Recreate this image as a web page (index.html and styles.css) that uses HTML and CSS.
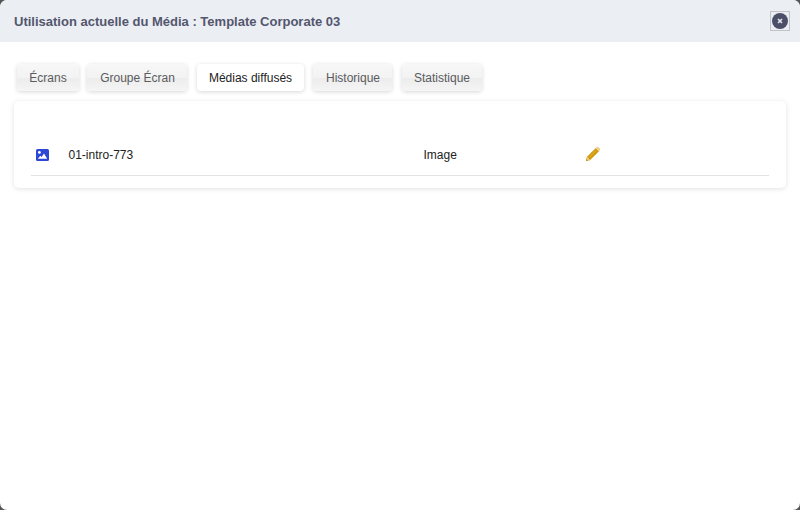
FILE: index.html
```html
<!DOCTYPE html>
<html lang="fr">
<head>
<meta charset="utf-8">
<title>Utilisation actuelle du Média</title>
<link rel="stylesheet" href="styles.css">
</head>
<body>
<div class="modal">
  <header class="modal-header">
    <h1 class="modal-title">Utilisation actuelle du Média : Template Corporate 03</h1>
    <button class="close" type="button" aria-label="Fermer">
      <svg viewBox="0 0 16 16" width="16" height="16" aria-hidden="true">
        <circle cx="8" cy="8" r="8" fill="#4b4f68"/>
        <path d="M6 6l4 4M10 6l-4 4" stroke="#e8e8ee" stroke-width="1.6"/>
      </svg>
    </button>
  </header>
  <main class="modal-body">
    <nav class="tabs">
      <a class="tab t1">Écrans</a>
      <a class="tab t2">Groupe Écran</a>
      <a class="tab t3 active">Médias diffusés</a>
      <a class="tab t4">Historique</a>
      <a class="tab t5">Statistique</a>
    </nav>
    <section class="card">
      <div class="row">
        <span class="cell-icon">
          <svg viewBox="0 0 13 12" width="13" height="12" aria-hidden="true">
            <rect width="13" height="12" rx="1.5" fill="#2f48d4"/>
            <circle cx="3.4" cy="3.4" r="1.4" fill="#fff"/>
            <path d="M1.8 9.800l2.600-3 1.200 1.200 2.400-3.400 3.200 5.200z" fill="#fff"/>
          </svg>
        </span>
        <span class="cell-name">01-intro-773</span>
        <span class="cell-type">Image</span>
        <span class="cell-action">
          <svg viewBox="0 0 16 16" width="16" height="16" aria-hidden="true">
            <path d="M1 15l1-4.200L10.800 2l3.200 3.200L5.200 14z" fill="#cf9a10"/>
            <path d="M11.600 1.200c.7-.7 1.600-.7 2.200 0l1 1c.6.6.6 1.500 0 2.200L14 5.200 10.800 2z" fill="#eed08f"/>
            <path d="M1 15l1-4.200L5.200 14z" fill="#eccb83"/>
            <path d="M1 15l.5-2 1.500 1.500z" fill="#b5820c"/>
            <path d="M4 11.600l7.200-7.200" stroke="#e8b62e" stroke-width="1"/>
          </svg>
        </span>
      </div>
    </section>
  </main>
</div>
</body>
</html>
```
FILE: styles.css
```css
* { box-sizing: border-box; }
html, body { height: 100%; }
body {
  margin: 0;
  background: #555;
  font-family: "Liberation Sans", Arial, sans-serif;
}
.modal {
  display: flex;
  flex-direction: column;
  height: 510px;
  background: #fff;
  border-radius: 7px;
  overflow: hidden;
}
.modal-header {
  flex: none;
  display: flex;
  align-items: center;
  justify-content: space-between;
  height: 42px;
  padding: 0 10px 0 14px;
  background: #ebeef3;
}
.modal-title {
  margin: 0;
  font-size: 13px;
  font-weight: 700;
  color: #53566e;
}
.close {
  display: flex;
  align-items: center;
  justify-content: center;
  width: 20px;
  height: 20px;
  padding: 0;
  background: transparent;
  border: 1px solid #c4c4c8;
}
.modal-body {
  flex: 1;
  padding: 22px 14px 0;
}
.tabs {
  display: flex;
  height: 27px;
  padding-left: 2.5px;
  margin-bottom: 10px;
}
.tab {
  display: flex;
  align-items: center;
  justify-content: center;
  height: 27px;
  padding-left: 1px;
  font-size: 12px;
  color: #5b5b60;
  background: linear-gradient(#f7f7f7 0%, #f3f3f3 50%, #ececec 52%, #f5f5f5 100%);
  border-radius: 4px;
  box-shadow: 0 1px 4px rgba(0, 0, 0, .16);
}
.t1 { width: 62px; margin-right: 8.500px; }
.t2 { width: 100px; margin-right: 9.500px; }
.t3 { width: 107px; margin-right: 9.500px; }
.t4 { width: 79px; margin-right: 9.500px; }
.t5 { width: 80px; }
.tab.active {
  color: #222;
  background: #fff;
}
.card {
  height: 87px;
  padding: 0 17px;
  background: #fff;
  border-radius: 5px;
  box-shadow: 0 1px 5px rgba(0, 0, 0, .12);
}
.row {
  display: flex;
  align-items: center;
  height: 75px;
  padding-top: 33px;
  border-bottom: 1px solid #e3e3e6;
  font-size: 12px;
  color: #222;
}
.cell-icon {
  display: flex;
  width: 37.500px;
  padding-left: 5px;
}
.cell-name { width: 355px; }
.cell-type { width: 161.500px; }
.cell-action {
  display: flex;
  margin-bottom: 2px;
}
```
